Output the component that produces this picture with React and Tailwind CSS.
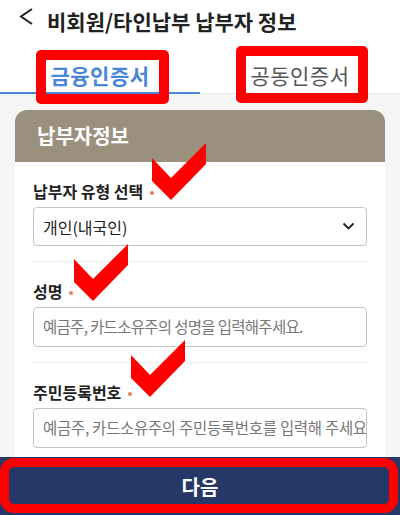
import React from "react";

const font = { fontFamily: '"Noto Sans CJK KR", "Noto Sans", sans-serif' };

const Check = ({ className }) => (
  <svg className={className} width="54" height="57" viewBox="0 0 54 57">
    <polygon points="0,15 19,35 54,0 54,21 19,57 0,38" fill="#ff0000" />
  </svg>
);

const Dot = () => (
  <span className="ml-[7px] inline-block h-[4px] w-[4px] translate-y-[2px] rounded-full bg-[#e8825a] align-middle"></span>
);

const Field = ({ label, children, last }) => (
  <div className={last ? "pt-[17px] pb-[15px]" : "border-b border-[#ececec] pt-[17px] pb-[15px]"}>
    <div className="flex items-center text-[16px] leading-[24px] font-bold text-[#222]">
      {label}
      <Dot />
    </div>
    <div className="mt-[4px]">{children}</div>
  </div>
);

export default function App() {
  return (
    <div style={font} className="relative flex h-[515px] w-[400px] flex-col overflow-hidden bg-white">
      {/* header */}
      <div className="flex h-[42px] shrink-0 items-center pl-[19px]">
        <svg width="16" height="20" viewBox="0 0 16 20" className="mr-[12px] -translate-y-[4px]">
          <polyline points="13,2 2,9.5 13,17" fill="none" stroke="#222" strokeWidth="2" />
        </svg>
        <h1 className="text-[21px] leading-[28px] font-bold text-[#222]">비회원/타인납부 납부자 정보</h1>
      </div>

      {/* tabs */}
      <div className="grid h-[52px] shrink-0 grid-cols-2">
        <div className="border-b-2 border-[#4a86d6] pt-[19px] text-center text-[21px] leading-[28px] tracking-[0.5px] font-bold text-[#4a86d6]">
          금융인증서
        </div>
        <div className="border-b border-[#e6e6e6] pt-[19px] text-center text-[21px] leading-[28px] tracking-[0.5px] text-[#555]">
          공동인증서
        </div>
      </div>

      {/* content */}
      <div className="flex-1 overflow-hidden bg-[#f6f6f6] px-[15px] pt-[16px]">
        <div className="rounded-t-[12px] bg-white">
          <div className="flex h-[52px] items-center rounded-t-[12px] bg-[#9b8f7e] px-[22px] text-[20px] font-bold text-white">
            납부자정보
          </div>
          <div className="px-[18px]">
            <Field label="납부자 유형 선택">
              <div className="flex h-[39px] items-center justify-between rounded-[4px] border border-[#c4c4c4] pl-[9px] pr-[11px] text-[16px] text-[#222]">
                <span>개인(내국인)</span>
                <svg width="13" height="9" viewBox="0 0 13 9">
                  <polyline points="1.5,1.5 6.5,6.5 11.5,1.5" fill="none" stroke="#222" strokeWidth="1.8" />
                </svg>
              </div>
            </Field>
            <Field label="성명">
              <div className="flex h-[40px] items-center overflow-hidden whitespace-nowrap rounded-[4px] border border-[#c4c4c4] pl-[9px] text-[15.5px] tracking-[-0.7px] text-[#777]">
                예금주, 카드소유주의 성명을 입력해주세요.
              </div>
            </Field>
            <Field label="주민등록번호" last>
              <div className="flex h-[40px] items-center overflow-hidden whitespace-nowrap rounded-[4px] border border-[#c4c4c4] pl-[9px] text-[15.5px] tracking-[-0.3px] text-[#777]">
                예금주, 카드소유주의 주민등록번호를 입력해 주세요.
              </div>
            </Field>
          </div>
        </div>
      </div>

      {/* bottom button */}
      <div className="flex h-[58px] shrink-0 items-center justify-center bg-[#253868] pt-[2px] text-[20px] font-bold text-white">
        다음
      </div>

      {/* annotations */}
      <div className="pointer-events-none absolute left-[36px] top-[50px] h-[54px] w-[133px] rounded-[5px] border-[10px] border-[#ff0000]"></div>
      <div className="pointer-events-none absolute left-[236px] top-[46px] h-[57px] w-[132px] rounded-[5px] border-[10px] border-[#ff0000]"></div>
      <div className="pointer-events-none absolute left-[0px] top-[458px] h-[55px] w-[398px] rounded-[14px] border-[9px] border-[#ff0000]"></div>
      <Check className="pointer-events-none absolute left-[152px] top-[143px]" />
      <Check className="pointer-events-none absolute left-[74px] top-[244px]" />
      <Check className="pointer-events-none absolute left-[131px] top-[340px]" />
    </div>
  );
}
